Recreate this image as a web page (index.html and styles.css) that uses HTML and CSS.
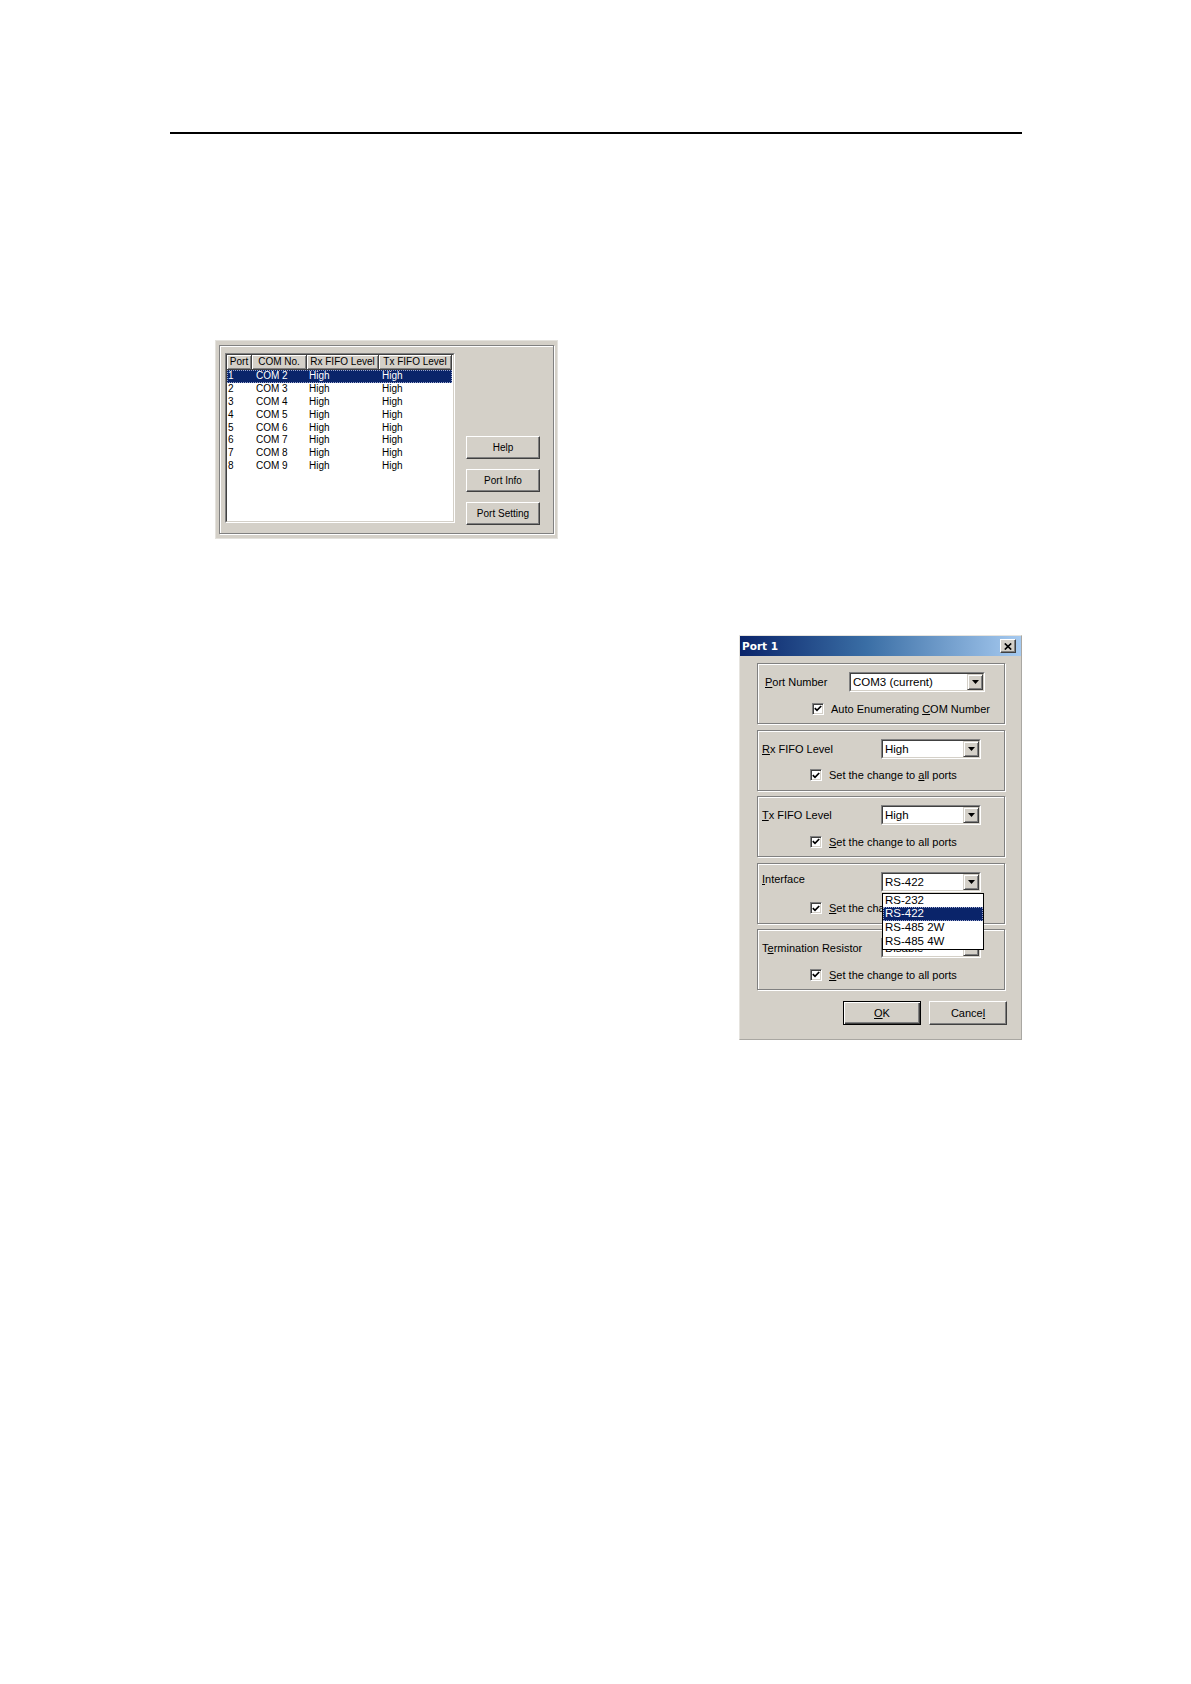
FILE: index.html
```html
<!DOCTYPE html>
<html>
<head>
<meta charset="utf-8">
<title>Port settings</title>
<link rel="stylesheet" href="styles.css">
</head>
<body>
<div class="page">
  <div class="rule"></div>

  <div class="portlist">
    <div class="portlist-frame">
      <div class="listview">
        <div class="lv-inner">
          <div class="lv-head">
            <div class="lv-hcell">Port</div>
            <div class="lv-hcell">COM No.</div>
            <div class="lv-hcell">Rx FIFO Level</div>
            <div class="lv-hcell">Tx FIFO Level</div>
          </div>
          <div class="lv-row selected"><span>1</span><span>COM 2</span><span>High</span><span>High</span></div>
          <div class="lv-row"><span>2</span><span>COM 3</span><span>High</span><span>High</span></div>
          <div class="lv-row"><span>3</span><span>COM 4</span><span>High</span><span>High</span></div>
          <div class="lv-row"><span>4</span><span>COM 5</span><span>High</span><span>High</span></div>
          <div class="lv-row"><span>5</span><span>COM 6</span><span>High</span><span>High</span></div>
          <div class="lv-row"><span>6</span><span>COM 7</span><span>High</span><span>High</span></div>
          <div class="lv-row"><span>7</span><span>COM 8</span><span>High</span><span>High</span></div>
          <div class="lv-row"><span>8</span><span>COM 9</span><span>High</span><span>High</span></div>
        </div>
      </div>
      <div class="side-buttons">
        <div class="sbtn">Help</div>
        <div class="sbtn">Port Info</div>
        <div class="sbtn">Port Setting</div>
      </div>
    </div>
  </div>

  <div class="dialog">
    <div class="titlebar">
      <span class="title">Port 1</span>
      <span class="closebtn"><svg width="8" height="7" viewBox="0 0 8 7"><path d="M0.8 0.5 L7.2 6.5 M7.2 0.5 L0.8 6.5" stroke="#000" stroke-width="1.7" fill="none"/></svg></span>
    </div>
    <div class="dlg-body">
      <div class="group">
        <div class="grow g1">
          <span class="glabel w84"><u>P</u>ort Number</span>
          <div class="combo w136">
            <div class="combo-inner">
              <span class="combo-text">COM3 (current)</span>
              <span class="combo-btn"><svg width="7" height="4" viewBox="0 0 7 4"><path d="M0 0 H7 L3.5 4 Z" fill="#000"/></svg></span>
            </div>
          </div>
        </div>
        <div class="crow c1">
          <span class="chk"><svg width="8" height="7" viewBox="0 0 8 7"><path d="M0.8 3.2 L3 5.4 L7.2 1" stroke="#000" stroke-width="1.7" fill="none"/></svg></span>
          <span>Auto Enumerating <u>C</u>OM Number</span>
        </div>
      </div>

      <div class="group">
        <div class="grow">
          <span class="glabel w119"><u>R</u>x FIFO Level</span>
          <div class="combo w100">
            <div class="combo-inner">
              <span class="combo-text">High</span>
              <span class="combo-btn"><svg width="7" height="4" viewBox="0 0 7 4"><path d="M0 0 H7 L3.5 4 Z" fill="#000"/></svg></span>
            </div>
          </div>
        </div>
        <div class="crow">
          <span class="chk"><svg width="8" height="7" viewBox="0 0 8 7"><path d="M0.8 3.2 L3 5.4 L7.2 1" stroke="#000" stroke-width="1.7" fill="none"/></svg></span>
          <span>Set the change to <u>a</u>ll ports</span>
        </div>
      </div>

      <div class="group">
        <div class="grow">
          <span class="glabel w119"><u>T</u>x FIFO Level</span>
          <div class="combo w100">
            <div class="combo-inner">
              <span class="combo-text">High</span>
              <span class="combo-btn"><svg width="7" height="4" viewBox="0 0 7 4"><path d="M0 0 H7 L3.5 4 Z" fill="#000"/></svg></span>
            </div>
          </div>
        </div>
        <div class="crow">
          <span class="chk"><svg width="8" height="7" viewBox="0 0 8 7"><path d="M0.8 3.2 L3 5.4 L7.2 1" stroke="#000" stroke-width="1.7" fill="none"/></svg></span>
          <span><u>S</u>et the change to all ports</span>
        </div>
      </div>

      <div class="group">
        <div class="grow">
          <span class="glabel w119 lift"><u>I</u>nterface</span>
          <div class="combo w100">
            <div class="combo-inner">
              <span class="combo-text">RS-422</span>
              <span class="combo-btn"><svg width="7" height="4" viewBox="0 0 7 4"><path d="M0 0 H7 L3.5 4 Z" fill="#000"/></svg></span>
            </div>
            <div class="droplist">
              <div class="ditem">RS-232</div>
              <div class="ditem sel">RS-422</div>
              <div class="ditem">RS-485 2W</div>
              <div class="ditem">RS-485 4W</div>
            </div>
          </div>
        </div>
        <div class="crow">
          <span class="chk"><svg width="8" height="7" viewBox="0 0 8 7"><path d="M0.8 3.2 L3 5.4 L7.2 1" stroke="#000" stroke-width="1.7" fill="none"/></svg></span>
          <span><u>S</u>et the change to all ports</span>
        </div>
      </div>

      <div class="group">
        <div class="grow">
          <span class="glabel w119">T<u>e</u>rmination Resistor</span>
          <div class="combo w100">
            <div class="combo-inner">
              <span class="combo-text">Disable</span>
              <span class="combo-btn"><svg width="7" height="4" viewBox="0 0 7 4"><path d="M0 0 H7 L3.5 4 Z" fill="#000"/></svg></span>
            </div>
          </div>
        </div>
        <div class="crow">
          <span class="chk"><svg width="8" height="7" viewBox="0 0 8 7"><path d="M0.8 3.2 L3 5.4 L7.2 1" stroke="#000" stroke-width="1.7" fill="none"/></svg></span>
          <span><u>S</u>et the change to all ports</span>
        </div>
      </div>

      <div class="btnrow">
        <div class="wbtn default"><u>O</u>K</div>
        <div class="wbtn">Cance<u>l</u></div>
      </div>
    </div>
  </div>
</div>
</body>
</html>
```

FILE: styles.css
```css
body {
  margin: 0;
  background: #fff;
}

.page {
  width: 1191px;
  height: 1684px;
  overflow: hidden;
  font-family: "Liberation Sans", Arial, sans-serif;
  color: #000;
}

.rule {
  margin: 132px 0 0 170px;
  width: 852px;
  height: 2px;
  background: #000;
}

/* ---------- port list window ---------- */
.portlist {
  margin: 206px 0 0 215px;
  width: 343px;
  height: 199px;
  box-sizing: border-box;
  background: #d4d0c8;
  border: 1px solid #e4e2dd;
  padding: 4px 3px 4px 3px;
}

.portlist-frame {
  height: 100%;
  box-sizing: border-box;
  border: 1px solid #808080;
  box-shadow: inset 1px 1px 0 #fff, 1px 1px 0 #fff;
  display: flex;
  align-items: flex-start;
  padding: 7px 10px 0 5px;
}

.listview {
  width: 230px;
  height: 170px;
  box-sizing: border-box;
  border: 1px solid;
  border-color: #808080 #fff #fff #808080;
  background: #fff;
}

.lv-inner {
  height: 100%;
  box-sizing: border-box;
  border: 1px solid;
  border-color: #404040 #d4d0c8 #d4d0c8 #404040;
  font-size: 10px;
}

.lv-head {
  display: grid;
  grid-template-columns: 25px 55px 72px 73px;
  height: 15px;
}

.lv-hcell {
  background: #d4d0c8;
  box-sizing: border-box;
  border-right: 1px solid #404040;
  border-bottom: 1px solid #404040;
  box-shadow: inset 1px 1px 0 #fff, inset -1px -1px 0 #808080;
  text-align: center;
  line-height: 14px;
  white-space: nowrap;
  overflow: hidden;
}

.lv-row {
  display: grid;
  grid-template-columns: 28px 53px 73px 1fr;
  height: 12.9px;
  line-height: 12.9px;
  padding-left: 1px;
  white-space: nowrap;
  width: 225px;
  box-sizing: border-box;
}

.lv-row.selected {
  background: #0a246a;
  color: #fff;
  outline: 1px dotted #9aa4cc;
  outline-offset: -1px;
}

.side-buttons {
  display: flex;
  flex-direction: column;
  gap: 10px;
  margin: 83px 0 0 11px;
}

.sbtn {
  width: 74px;
  height: 23px;
  box-sizing: border-box;
  background: #d4d0c8;
  border: 1px solid;
  border-color: #fff #404040 #404040 #fff;
  box-shadow: inset -1px -1px 0 #808080;
  font-size: 10px;
  display: flex;
  align-items: center;
  justify-content: center;
}

/* ---------- Port 1 dialog ---------- */
.dialog {
  margin: 96px 0 0 739px;
  width: 283px;
  height: 405px;
  box-sizing: border-box;
  background: #d4d0c8;
  border: 1px solid;
  border-color: #e6e4df #a9a7a2 #a9a7a2 #e6e4df;
  font-size: 11px;
}

.titlebar {
  height: 20px;
  background: linear-gradient(to right, #0a246a 0%, #3a6ea5 45%, #a6caf0 100%);
  display: flex;
  align-items: center;
  justify-content: space-between;
  padding: 0 5px 0 2px;
}

.title {
  color: #fff;
  font-family: "DejaVu Sans", Verdana, sans-serif;
  font-weight: bold;
  font-size: 10.5px;
}

.closebtn {
  width: 16px;
  height: 14px;
  box-sizing: border-box;
  background: #d4d0c8;
  border: 1px solid;
  border-color: #fff #404040 #404040 #fff;
  box-shadow: inset -1px -1px 0 #808080;
  display: flex;
  align-items: center;
  justify-content: center;
}

.dlg-body {
  padding: 7px 14px 0 17px;
  display: flex;
  flex-direction: column;
  gap: 5.5px;
}

.group {
  height: 61px;
  margin-right: 2px;
  box-sizing: border-box;
  border: 1px solid #808080;
  box-shadow: inset 1px 1px 0 #fff, 1px 1px 0 #fff;
  padding-top: 8px;
}

.grow {
  display: flex;
  align-items: center;
  height: 20px;
  padding-left: 4px;
}

.grow.g1 {
  padding-left: 7px;
}

.glabel {
  white-space: nowrap;
}

.glabel.lift {
  margin-top: -5px;
}

.w84 { flex: 0 0 84px; }
.w119 { flex: 0 0 119px; }
.w136 { width: 136px; }
.w100 { width: 100px; }

.combo {
  position: relative;
  height: 20px;
  box-sizing: border-box;
  border: 1px solid;
  border-color: #808080 #fff #fff #808080;
  background: #fff;
}

.combo-inner {
  height: 100%;
  box-sizing: border-box;
  border: 1px solid;
  border-color: #404040 #d4d0c8 #d4d0c8 #404040;
  display: flex;
  align-items: center;
}

.combo-text {
  flex: 1;
  padding-left: 2px;
  white-space: nowrap;
  font-size: 11.5px;
}

.combo-btn {
  width: 16px;
  height: 16px;
  box-sizing: border-box;
  background: #d4d0c8;
  border: 1px solid;
  border-color: #d4d0c8 #404040 #404040 #d4d0c8;
  box-shadow: inset 1px 1px 0 #fff, inset -1px -1px 0 #808080;
  display: flex;
  align-items: center;
  justify-content: center;
}

.droplist {
  position: absolute;
  top: 20px;
  left: 0;
  width: 102px;
  box-sizing: border-box;
  border: 1px solid #000;
  background: #fff;
  z-index: 2;
}

.ditem {
  height: 13.8px;
  line-height: 13.8px;
  padding-left: 2px;
  font-size: 11.5px;
  white-space: nowrap;
}

.ditem.sel {
  background: #0a246a;
  color: #fff;
  outline: 1px dotted #9aa4cc;
  outline-offset: -1px;
}

.crow {
  display: flex;
  align-items: center;
  gap: 7px;
  height: 14px;
  margin-top: 9.5px;
  padding-left: 52px;
  white-space: nowrap;
}

.crow.c1 {
  padding-left: 54px;
}

.chk {
  width: 12px;
  height: 12px;
  box-sizing: border-box;
  background: #fff;
  border: 1px solid;
  border-color: #808080 #fff #fff #808080;
  box-shadow: inset 1px 1px 0 #404040, inset -1px -1px 0 #d4d0c8;
  display: flex;
  align-items: center;
  justify-content: center;
  flex: 0 0 12px;
}

.btnrow {
  display: flex;
  justify-content: flex-end;
  gap: 8px;
  margin-top: 5.5px;
}

.wbtn {
  width: 78px;
  height: 24px;
  box-sizing: border-box;
  background: #d4d0c8;
  border: 1px solid;
  border-color: #fff #404040 #404040 #fff;
  box-shadow: inset -1px -1px 0 #808080;
  display: flex;
  align-items: center;
  justify-content: center;
}

.wbtn.default {
  border: 1px solid #000;
  box-shadow: inset 1px 1px 0 #fff, inset -1px -1px 0 #404040, inset -2px -2px 0 #808080;
}
```
